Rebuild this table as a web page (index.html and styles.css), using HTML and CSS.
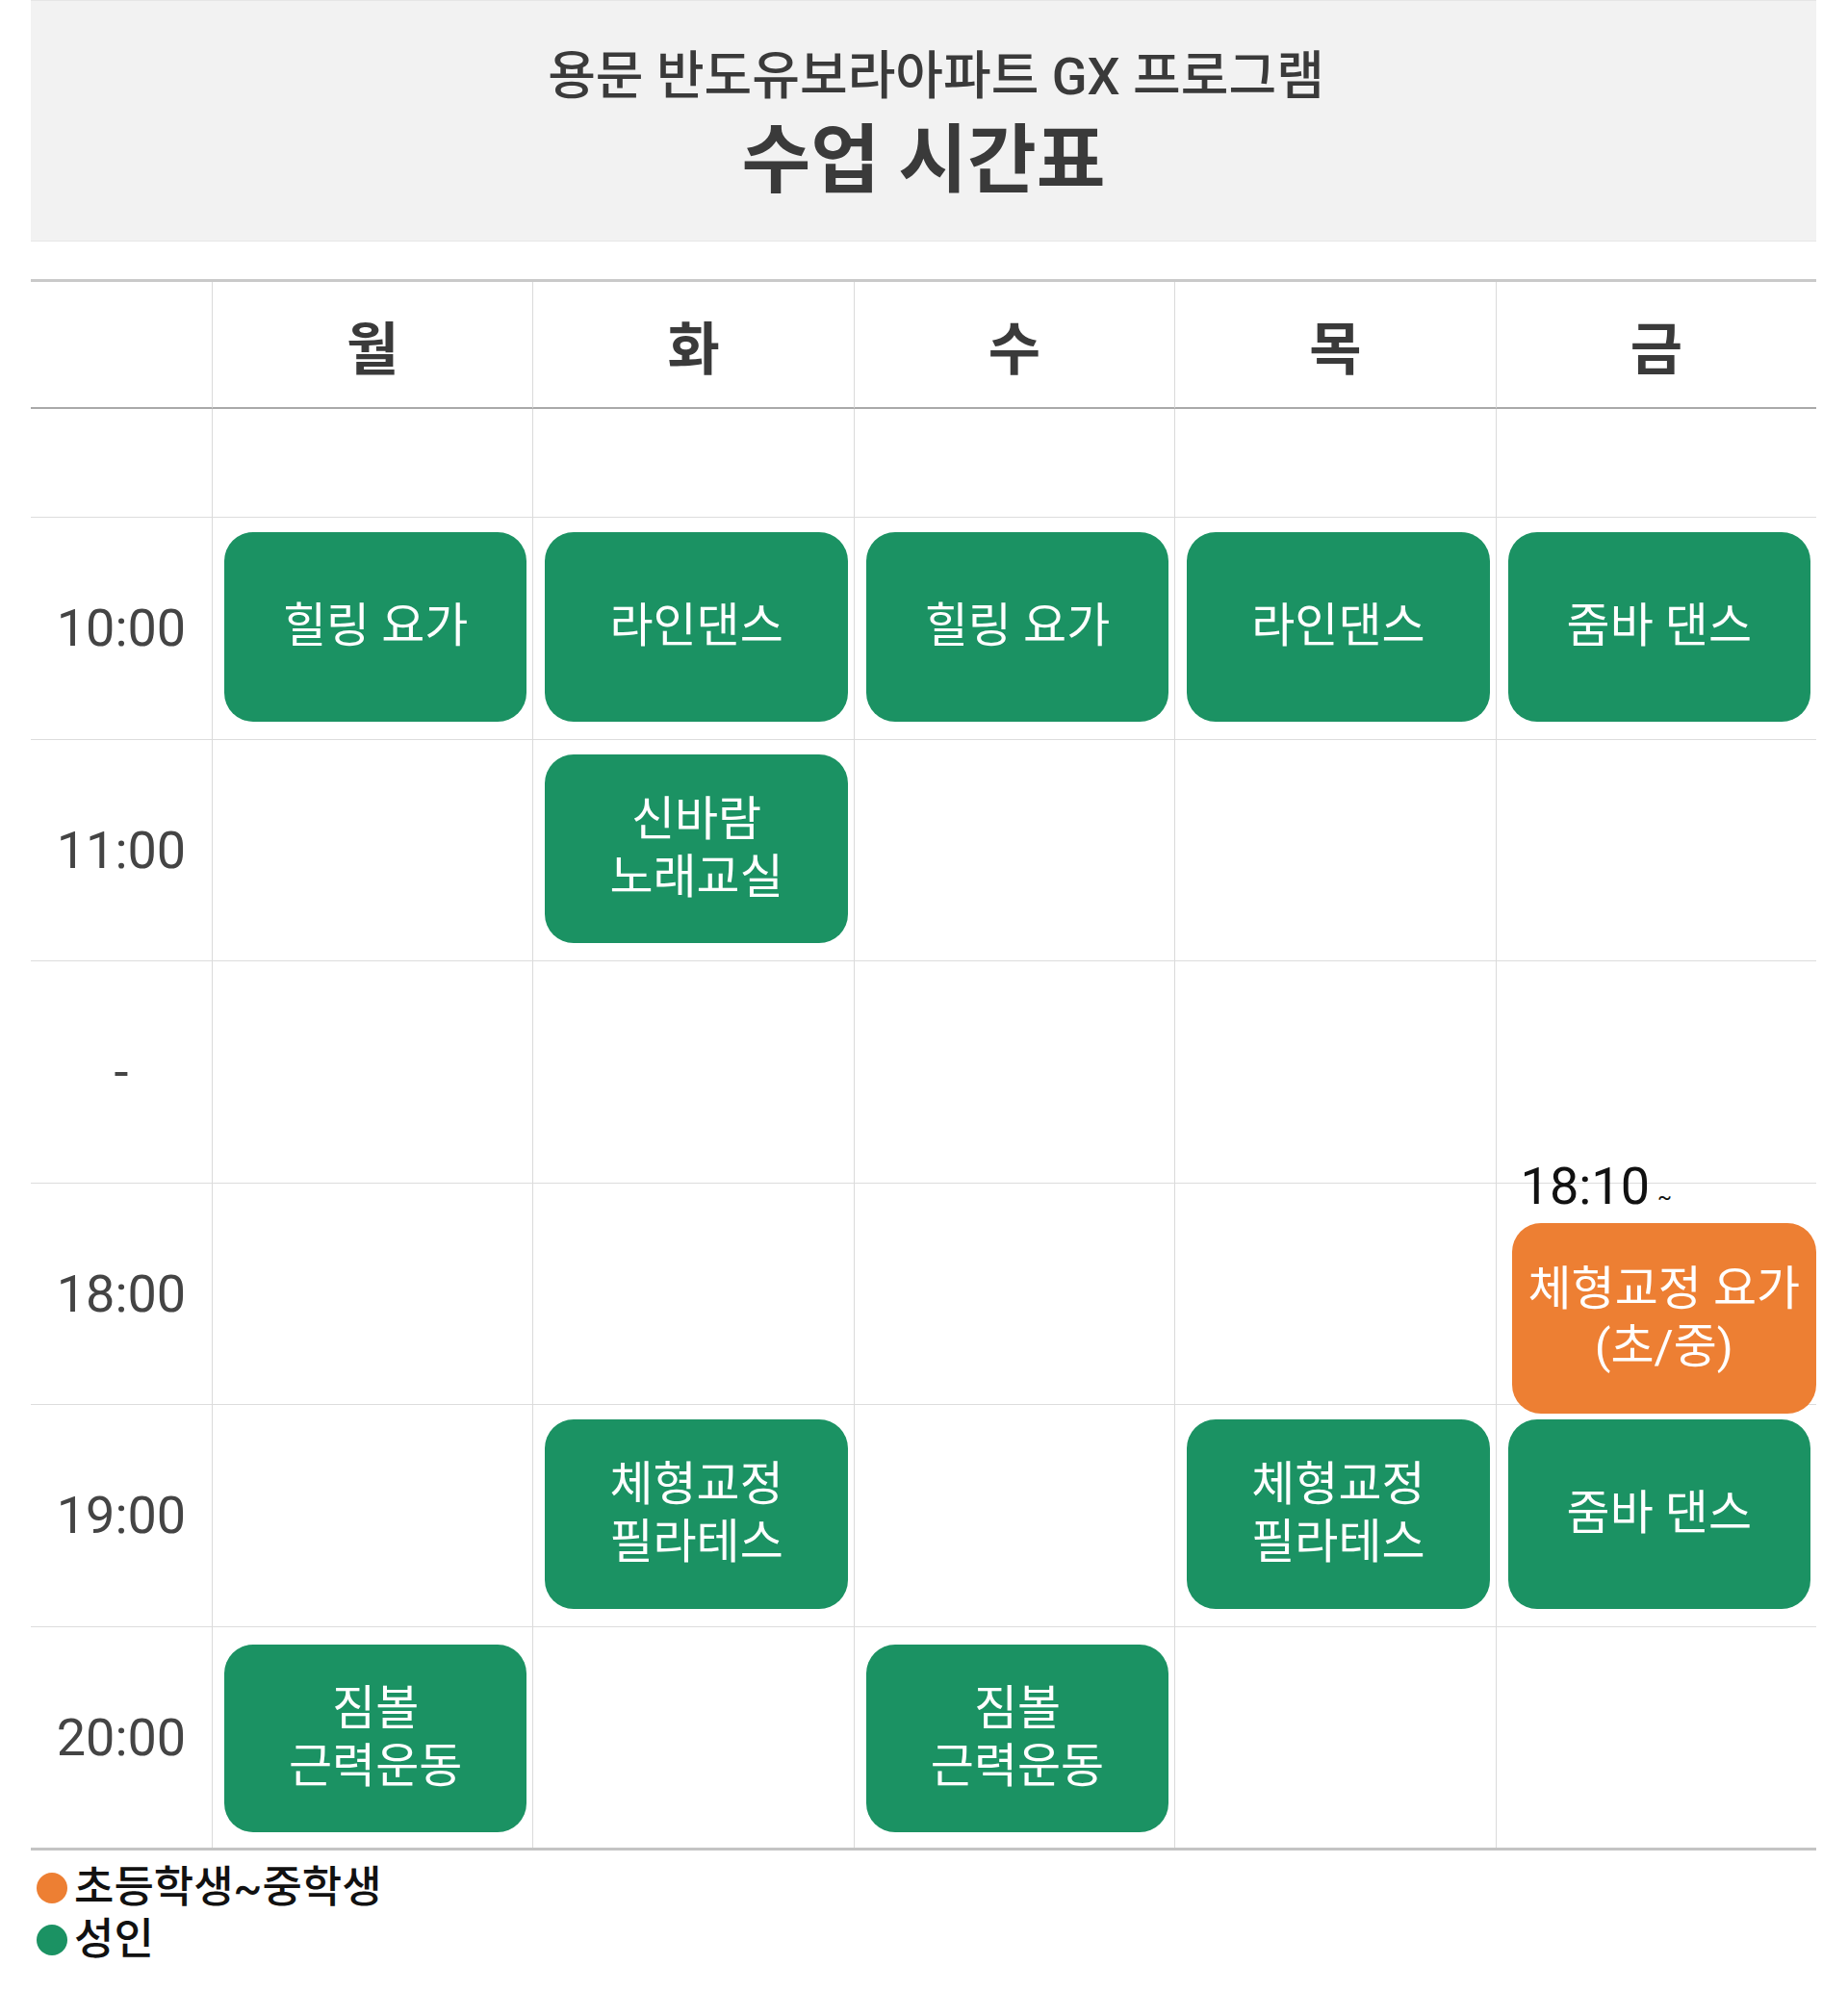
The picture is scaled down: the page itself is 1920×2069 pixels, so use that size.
FILE: index.html
```html
<!DOCTYPE html>
<html lang="ko">
<head>
<meta charset="utf-8">
<title>수업 시간표</title>
<link rel="stylesheet" href="styles.css">
</head>
<body>
<div class="page">
  <header class="banner">
    <div class="banner-sub">용문 반도유보라아파트 GX 프로그램</div>
    <div class="banner-title">수업 시간표</div>
  </header>

  <div class="timetable">
    <div class="cell head first"></div>
    <div class="cell head">월</div>
    <div class="cell head">화</div>
    <div class="cell head">수</div>
    <div class="cell head">목</div>
    <div class="cell head">금</div>

    <div class="cell blank first"></div>
    <div class="cell blank"></div>
    <div class="cell blank"></div>
    <div class="cell blank"></div>
    <div class="cell blank"></div>
    <div class="cell blank"></div>

    <div class="cell row first time">10:00</div>
    <div class="cell row slot"><div class="card">힐링 요가</div></div>
    <div class="cell row slot"><div class="card">라인댄스</div></div>
    <div class="cell row slot"><div class="card">힐링 요가</div></div>
    <div class="cell row slot"><div class="card">라인댄스</div></div>
    <div class="cell row slot"><div class="card">줌바 댄스</div></div>

    <div class="cell row first time">11:00</div>
    <div class="cell row slot"></div>
    <div class="cell row slot"><div class="card">신바람<br>노래교실</div></div>
    <div class="cell row slot"></div>
    <div class="cell row slot"></div>
    <div class="cell row slot"></div>

    <div class="cell row first time">-</div>
    <div class="cell row slot"></div>
    <div class="cell row slot"></div>
    <div class="cell row slot"></div>
    <div class="cell row slot"></div>
    <div class="cell row slot"></div>

    <div class="cell row first time">18:00</div>
    <div class="cell row slot"></div>
    <div class="cell row slot"></div>
    <div class="cell row slot"></div>
    <div class="cell row slot"></div>
    <div class="cell row slot slot-late">
      <div class="start-label">18:10<span class="tilde">~</span></div>
      <div class="card card-youth">체형교정 요가<br>(초/중)</div>
    </div>

    <div class="cell row first time">19:00</div>
    <div class="cell row slot"></div>
    <div class="cell row slot"><div class="card">체형교정<br>필라테스</div></div>
    <div class="cell row slot"></div>
    <div class="cell row slot"><div class="card">체형교정<br>필라테스</div></div>
    <div class="cell row slot"><div class="card">줌바 댄스</div></div>

    <div class="cell row first time">20:00</div>
    <div class="cell row slot slot-last"><div class="card">짐볼<br>근력운동</div></div>
    <div class="cell row slot slot-last"></div>
    <div class="cell row slot slot-last"><div class="card">짐볼<br>근력운동</div></div>
    <div class="cell row slot slot-last"></div>
    <div class="cell row slot slot-last"></div>
  </div>

  <ul class="legend">
    <li class="legend-item"><span class="dot dot-youth"></span>초등학생~중학생</li>
    <li class="legend-item"><span class="dot dot-adult"></span>성인</li>
  </ul>
</div>
</body>
</html>
```

FILE: styles.css
```css
* {
  box-sizing: border-box;
}

html, body {
  margin: 0;
  padding: 0;
  background: #ffffff;
}

body {
  font-family: Roboto, "Noto Sans CJK KR", sans-serif;
  color: #3a3a3a;
}

.page {
  width: 1920px;
  padding: 0 33px 0 32px;
}

/* ---------- banner ---------- */
.banner {
  height: 251px;
  background: #f2f2f2;
  border-top: 1px solid #e6e6e6;
  border-bottom: 1px solid #e6e6e6;
  padding-top: 46px;
  display: flex;
  flex-direction: column;
  align-items: center;
}

.banner-sub {
  font-size: 54px;
  font-weight: 500;
  line-height: 66px;
  color: #3a3a3a;
  margin-bottom: 10px;
  padding-left: 26px;
}

.banner-title {
  font-size: 78px;
  font-weight: 700;
  line-height: 90px;
  color: #3a3a3a;
}

/* ---------- timetable ---------- */
.timetable {
  margin-top: 39px;
  display: grid;
  grid-template-columns: 188px repeat(5, 1fr);
  grid-template-rows: 132px 112px repeat(6, 230.5px);
  border-top: 3px solid #c9c9c9;
  border-bottom: 3px solid #c4c4c4;
}

.cell {
  border-left: 1px solid #dadada;
  min-width: 0;
}

.cell.first {
  border-left: none;
}

.head {
  border-bottom: 2px solid #a9a9a9;
  display: flex;
  align-items: center;
  justify-content: center;
  font-size: 59px;
  font-weight: 700;
  color: #3a3a3a;
}

.row {
  border-top: 1px solid #dddddd;
}

.time {
  display: flex;
  align-items: center;
  justify-content: center;
  font-size: 54px;
  font-weight: 400;
  color: #444444;
}

.slot {
  display: flex;
  padding: 15px 6px 18px 12px;
}

.slot-last {
  padding-top: 18px;
  padding-bottom: 16px;
}

.card {
  flex: 1;
  border-radius: 30px;
  background: #1b9263;
  color: #ffffff;
  font-size: 49px;
  font-weight: 400;
  line-height: 1.22;
  display: flex;
  align-items: center;
  justify-content: center;
  text-align: center;
}

.slot-late {
  position: relative;
  padding: 41px 0 0 16px;
  align-items: flex-start;
}

.card-youth {
  height: 198px;
  background: #ed7f33;
  position: relative;
  z-index: 1;
}

.start-label {
  position: absolute;
  left: 25px;
  top: -24px;
  font-size: 54px;
  line-height: 54px;
  color: #111111;
  white-space: nowrap;
}

.tilde {
  font-size: 22px;
  margin-left: 8px;
}

/* ---------- legend ---------- */
.legend {
  list-style: none;
  margin: 12px 0 0 0;
  padding: 0 0 0 6px;
}

.legend-item {
  display: flex;
  align-items: center;
  font-size: 45px;
  font-weight: 500;
  line-height: 54px;
  color: #111111;
}

.dot {
  width: 32px;
  height: 32px;
  border-radius: 50%;
  margin-right: 7px;
  flex: none;
}

.dot-youth {
  background: #ed7f33;
}

.dot-adult {
  background: #1b9263;
}
```
